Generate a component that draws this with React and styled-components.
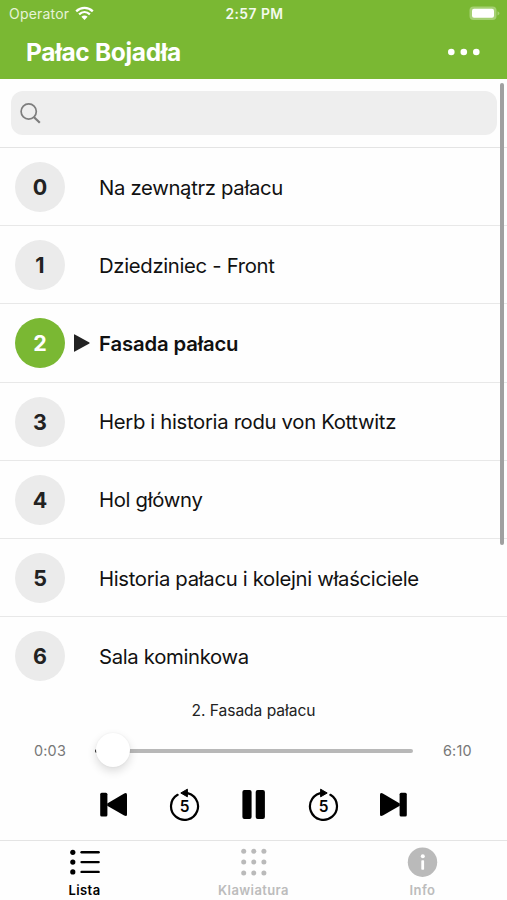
import { useState } from "react";
import styled, { createGlobalStyle } from "styled-components";

const GlobalStyle = createGlobalStyle`
    * {
        box-sizing: border-box;
    }

    body {
        margin: 0;
        background: #fff;
        font-family: Inter, "Liberation Sans", sans-serif;
    }

    button {
        padding: 0;
        border: none;
        background: none;
        font-family: inherit;
        cursor: pointer;
    }

    svg {
        display: block;
    }
`;

const Screen = styled.div`
    display: flex;
    flex-direction: column;
    width: 100%;
    height: 900px;
    overflow: hidden;
    background: #fefefe;
`;

const Header = styled.header`
    height: 79px;
    background: #7ab833;
    color: #fff;
`;

const StatusBar = styled.div`
    display: grid;
    grid-template-columns: 1fr auto 1fr;
    align-items: center;
    height: 27px;
    padding: 0 7px 0 9px;
    font-size: 14px;
`;

const Carrier = styled.div`
    display: flex;
    align-items: center;
    gap: 6px;
    color: #e6f3d8;
    letter-spacing: 0.2px;
`;

const Clock = styled.div`
    font-weight: 600;
    font-size: 13.8px;
    letter-spacing: 0.5px;
    color: #f4faee;
`;

const BatteryIcon = styled.svg`
    justify-self: end;
`;

const TitleBar = styled.div`
    display: flex;
    justify-content: space-between;
    align-items: center;
    height: 50px;
    padding: 0 26px;
`;

const Title = styled.h1`
    margin: 0;
    font-size: 24.5px;
    font-weight: 700;
    letter-spacing: -0.33px;
`;

const Content = styled.main`
    position: relative;
    flex: 1;
    overflow: hidden;
`;

const SearchBar = styled.div`
    height: 69px;
    padding: 12px 10px 0 11px;
    border-bottom: 1px solid #e4e4e4;
`;

const SearchField = styled.label`
    display: flex;
    align-items: center;
    height: 44px;
    padding-left: 9px;
    border-radius: 12px;
    background: #eee;
`;

const SearchInput = styled.input`
    flex: 1;
    padding: 0 10px;
    border: none;
    outline: none;
    background: none;
    font-family: inherit;
    font-size: 18px;
`;

const TrackList = styled.ul`
    margin: 0;
    padding: 0;
    list-style: none;
`;

const TrackRow = styled.li`
    display: grid;
    grid-template-columns: 50px 34px 1fr;
    align-items: center;
    height: 78.2px;
    padding: 1px 0 0 15px;
    border-bottom: 1px solid #e8e8e8;
    cursor: pointer;

    &:last-child {
        border-bottom-color: transparent;
    }
`;

const TrackNumber = styled.span`
    display: flex;
    justify-content: center;
    align-items: center;
    width: 50px;
    height: 50px;
    border-radius: 50%;
    background: ${(props) => (props.$active ? "#7ab833" : "#ebebeb")};
    color: ${(props) => (props.$active ? "#fff" : "#222")};
    font-size: 21.5px;
    font-weight: 650;
`;

const TrackName = styled.span`
    color: #111;
    font-size: 20.3px;
    font-weight: ${(props) => (props.$active ? 600 : 400)};
    letter-spacing: ${(props) => (props.$active ? "-0.13px" : "-0.32px")};
    white-space: nowrap;
`;

const Marker = styled.span`
    padding-left: 9px;
`;

const ScrollThumb = styled.div`
    position: absolute;
    top: 4px;
    right: 3px;
    width: 4px;
    height: 462px;
    border-radius: 2px;
    background: #a0a0a0;
`;

const Player = styled.section`
    height: 146px;
    padding-top: 7px;
    background: #fefefe;
`;

const PlayerTitle = styled.div`
    color: #222;
    font-size: 15.6px;
    line-height: 20px;
    letter-spacing: -0.05px;
    text-align: center;
`;

const Timeline = styled.div`
    display: grid;
    grid-template-columns: 61px 318px 1fr;
    align-items: center;
    height: 59px;
    padding-left: 34px;
`;

const Time = styled.span`
    color: #777;
    font-size: 14.4px;
    letter-spacing: 0.2px;
    ${(props) => props.$end && "padding-left: 30px;"}
`;

const Track = styled.div`
    display: flex;
    align-items: center;
    height: 4.5px;
    margin-top: 1px;
    border-radius: 2px;
    background: linear-gradient(to right, #222 2px, #b8b8b8 2px);
`;

const Knob = styled.div`
    width: 34px;
    height: 34px;
    margin: -3px 0 0 1px;
    border-radius: 50%;
    background: #fff;
    box-shadow:
        0 4px 10px rgba(0, 0, 0, 0.14),
        0 0 2px rgba(0, 0, 0, 0.06);
`;

const Controls = styled.div`
    display: flex;
    justify-content: space-between;
    align-items: center;
    height: 49px;
    padding: 0 99px;
`;

const TabBar = styled.nav`
    display: grid;
    grid-template-columns: repeat(3, 1fr);
    height: 60px;
    border-top: 1px solid #e4e4e4;
`;

const Tab = styled.button`
    display: flex;
    flex-direction: column;
    align-items: center;
    gap: 4px;
    padding-top: 6px;
    color: ${(props) => (props.$active ? "#000" : "#bcbcbc")};
    font-size: 13px;
    font-weight: 600;
    line-height: 16px;
    letter-spacing: 0.4px;
`;

const tracks = [
    "Na zewnątrz pałacu",
    "Dziedziniec - Front",
    "Fasada pałacu",
    "Herb i historia rodu von Kottwitz",
    "Hol główny",
    "Historia pałacu i kolejni właściciele",
    "Sala kominkowa",
];

const WifiIcon = () => (
    <svg width="19" height="15" viewBox="0 0 19 15" fill="none">
        <path
            d="M1.2 5.3C6 .7 13 .7 17.8 5.3M4.1 8.3c3.2-3 7.6-3 10.8 0"
            stroke="#fff"
            strokeWidth="2.3"
        />
        <path d="M6.4 10.8c1.8-1.7 4.4-1.7 6.2 0L9.5 14z" fill="#fff" />
    </svg>
);

const Battery = () => (
    <BatteryIcon width="31" height="15" viewBox="0 0 31 15">
        <rect x=".5" y=".5" width="27" height="13.5" rx="4" fill="#a5d073" />
        <rect x="3" y="2.7" width="22" height="9" rx="2" fill="#fff" />
        <path d="M28.5 5.2c2.6.8 2.6 3.4 0 4.2z" fill="#a5d073" />
    </BatteryIcon>
);

const MoreIcon = () => (
    <svg width="34" height="8" viewBox="0 0 34 8" fill="#fff">
        <circle cx="4.3" cy="4" r="3.3" />
        <circle cx="16.8" cy="4" r="3.3" />
        <circle cx="29.3" cy="4" r="3.3" />
    </svg>
);

const SearchIcon = () => (
    <svg
        width="21"
        height="21"
        viewBox="0 0 21 21"
        fill="none"
        stroke="#7d7d7d"
    >
        <circle cx="8.7" cy="8.5" r="7.6" strokeWidth="1.7" />
        <path d="M13.8 14l6 5.8" strokeWidth="2.2" />
    </svg>
);

const PlayingIcon = () => (
    <svg width="16" height="18" viewBox="0 0 16 18" fill="#222">
        <path d="M0 .8Q0 0 .8.4L15.4 8.5q.6.5 0 1L.8 17.6Q0 18 0 17.2z" />
    </svg>
);

const SkipIcon = ({ forward }) => (
    <svg width="28" height="26" viewBox="0 0 28 26">
        <g transform={forward ? "matrix(-1 0 0 1 28 0)" : undefined}>
            <rect x="1.2" y=".8" width="7.2" height="23.6" rx="1.5" />
            <path d="M8.2 11.4L25.2 1.4q2.8-1.2 2.8 1.2v19.8q0 2.4-2.8 1.2L8.2 13.8z" />
        </g>
    </svg>
);

const SeekIcon = ({ forward }) => (
    <svg width="31" height="34" viewBox="0 0 31 34">
        <g transform={forward ? "matrix(-1 0 0 1 31 0)" : undefined}>
            <path
                d="M8.6 6.8A13.5 13.5 0 1 0 16 4.9"
                fill="none"
                stroke="#000"
                strokeWidth="2.2"
                strokeLinecap="round"
            />
            <path
                d="M18.4 1.2v7.6l-6.6-3.8z"
                stroke="#000"
                strokeLinejoin="round"
            />
        </g>
        <text
            x="15.5"
            y="24"
            textAnchor="middle"
            fontSize="15.5"
            fontWeight="600"
        >
            5
        </text>
    </svg>
);

const PauseIcon = () => (
    <svg width="25" height="30" viewBox="0 0 25 30">
        <rect x="1.4" y=".1" width="9.2" height="29" rx="2" />
        <rect x="14.7" y=".1" width="9.2" height="29" rx="2" />
    </svg>
);

const ListIcon = () => (
    <svg width="31" height="31" viewBox="0 0 31 31">
        {[5.3, 15.1, 24.9].map((y) => (
            <g key={y}>
                <circle cx="3.8" cy={y} r="2.6" />
                <path
                    d={`M12.6 ${y}h17`}
                    stroke="#000"
                    strokeWidth="2.4"
                    strokeLinecap="round"
                />
            </g>
        ))}
    </svg>
);

const KeypadIcon = () => (
    <svg width="31" height="31" viewBox="0 0 31 31" fill="#bababa">
        {[4.3, 15.1, 26].map((y) =>
            [5.7, 15.8, 25.9].map((x) => (
                <circle key={`${x}-${y}`} cx={x} cy={y} r="2.5" />
            ))
        )}
    </svg>
);

const InfoIcon = () => (
    <svg width="31" height="31" viewBox="0 0 31 31">
        <circle cx="15.5" cy="15.2" r="14.7" fill="#bababa" />
        <circle cx="15.8" cy="9.2" r="2" fill="#fff" />
        <rect x="14.3" y="13.2" width="2.8" height="9.6" rx=".7" fill="#fff" />
    </svg>
);

const App = () => {
    const [current, setCurrent] = useState(2);
    const [tab, setTab] = useState("Lista");

    const tabs = [
        { name: "Lista", icon: <ListIcon /> },
        { name: "Klawiatura", icon: <KeypadIcon /> },
        { name: "Info", icon: <InfoIcon /> },
    ];

    return (
        <Screen>
            <GlobalStyle />
            <Header>
                <StatusBar>
                    <Carrier>
                        Operator
                        <WifiIcon />
                    </Carrier>
                    <Clock>2:57 PM</Clock>
                    <Battery />
                </StatusBar>
                <TitleBar>
                    <Title>Pałac Bojadła</Title>
                    <button type="button">
                        <MoreIcon />
                    </button>
                </TitleBar>
            </Header>

            <Content>
                <SearchBar>
                    <SearchField>
                        <SearchIcon />
                        <SearchInput type="text" />
                    </SearchField>
                </SearchBar>
                <TrackList>
                    {tracks.map((name, i) => (
                        <TrackRow key={name} onClick={() => setCurrent(i)}>
                            <TrackNumber $active={i === current}>
                                {i}
                            </TrackNumber>
                            <Marker>{i === current && <PlayingIcon />}</Marker>
                            <TrackName $active={i === current}>{name}</TrackName>
                        </TrackRow>
                    ))}
                </TrackList>
                <ScrollThumb />
            </Content>

            <Player>
                <PlayerTitle>
                    {current}. {tracks[current]}
                </PlayerTitle>
                <Timeline>
                    <Time>0:03</Time>
                    <Track>
                        <Knob />
                    </Track>
                    <Time $end>6:10</Time>
                </Timeline>
                <Controls>
                    <button type="button">
                        <SkipIcon />
                    </button>
                    <button type="button">
                        <SeekIcon />
                    </button>
                    <button type="button">
                        <PauseIcon />
                    </button>
                    <button type="button">
                        <SeekIcon forward />
                    </button>
                    <button type="button">
                        <SkipIcon forward />
                    </button>
                </Controls>
            </Player>

            <TabBar>
                {tabs.map(({ name, icon }) => (
                    <Tab
                        key={name}
                        type="button"
                        $active={tab === name}
                        onClick={() => setTab(name)}
                    >
                        {icon}
                        {name}
                    </Tab>
                ))}
            </TabBar>
        </Screen>
    );
};

export default App;
